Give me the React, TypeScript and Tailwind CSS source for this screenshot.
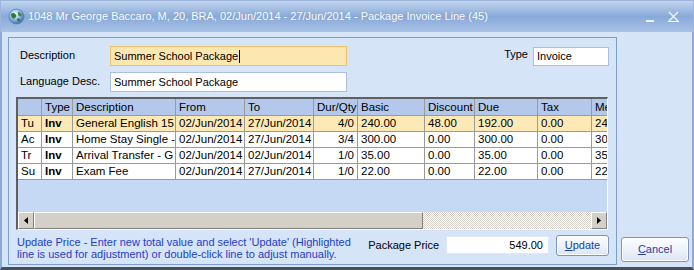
import React from "react";

const cols = [
  { w: 24, label: "", align: "left" },
  { w: 31, label: "Type", align: "left" },
  { w: 103, label: "Description", align: "left" },
  { w: 69, label: "From", align: "left" },
  { w: 69, label: "To", align: "left" },
  { w: 44, label: "Dur/Qty", align: "right" },
  { w: 67, label: "Basic", align: "left" },
  { w: 50, label: "Discount", align: "left" },
  { w: 63, label: "Due", align: "left" },
  { w: 54, label: "Tax", align: "left" },
  { w: 60, label: "Me", align: "left" },
];

const rows = [
  ["Tu", "Inv", "General English 15", "02/Jun/2014", "27/Jun/2014", "4/0", "240.00", "48.00", "192.00", "0.00", "240.00"],
  ["Ac", "Inv", "Home Stay Single -", "02/Jun/2014", "27/Jun/2014", "3/4", "300.00", "0.00", "300.00", "0.00", "300.00"],
  ["Tr", "Inv", "Arrival Transfer - G", "02/Jun/2014", "02/Jun/2014", "1/0", "35.00", "0.00", "35.00", "0.00", "35.00"],
  ["Su", "Inv", "Exam Fee", "02/Jun/2014", "27/Jun/2014", "1/0", "22.00", "0.00", "22.00", "0.00", "22.00"],
];

function Globe() {
  return (
    <svg width="17" height="17" viewBox="0 0 17 17">
      <defs>
        <radialGradient id="g1" cx="40%" cy="35%" r="70%">
          <stop offset="0%" stopColor="#ffffff" />
          <stop offset="45%" stopColor="#9cc4e8" />
          <stop offset="100%" stopColor="#2e5fa8" />
        </radialGradient>
      </defs>
      <circle cx="8.5" cy="8.5" r="7.5" fill="url(#g1)" stroke="#5a7fb8" strokeWidth="0.8" />
      <path d="M3 6 C5 4 7 5 8 7 C9 9 7 10 5 11 C4 10 3 8 3 6 Z" fill="#2f7a3a" />
      <path d="M10 4 C12 4 14 6 14 8 C13 9 11 8 10 7 Z" fill="#3d8a44" />
      <path d="M9 11 C11 10 13 11 12 13 C11 14 9 13 9 11 Z" fill="#2f7a3a" />
    </svg>
  );
}

function Btn({ children, w, h }: { children: React.ReactNode; w: string; h: string }) {
  return (
    <div
      className={`${w} ${h} flex items-center justify-center rounded-[3px] border border-[#7d95bd] bg-gradient-to-b from-[#fbfdff] via-[#eef3fb] to-[#dbe5f3] text-[#1d3f9e] shadow-[inset_0_0_0_1px_#ffffff]`}
    >
      {children}
    </div>
  );
}

export default function App() {
  return (
    <div
      className="w-[694px] h-[270px] flex flex-col overflow-hidden text-[11px] leading-[13px] text-black"
      style={{ fontFamily: '"Liberation Sans", Arial, sans-serif' }}
    >
      {/* Title bar */}
      <div className="h-[32px] flex items-center border-t border-l border-r border-[#9db4dc] bg-gradient-to-b from-[#c3d5ef] via-[#88a9d8] to-[#a9c2e6] pl-[7px] pr-[14px]">
        <Globe />
        <div className="ml-[3px] text-white text-[11px] [text-shadow:0_0_1px_#6f8fc0] whitespace-nowrap">
          1048 Mr George Baccaro, M, 20, BRA, 02/Jun/2014 - 27/Jun/2014 - Package Invoice Line (45)
        </div>
        <div className="flex-1" />
        <div className="flex items-center gap-[14px]">
          <div className="w-[8px] h-[2px] bg-[#eef3fa] mt-[8px]" />
          <svg width="11" height="11" viewBox="0 0 11 11" className="mb-[1px]">
            <path d="M1 1 L10 10 M10 1 L1 10" stroke="#e6edf7" strokeWidth="1.6" />
            <path d="M0 10.5 L11 10.5" stroke="#ffffff" strokeWidth="1" />
          </svg>
        </div>
      </div>

      {/* Body */}
      <div className="flex-1 flex bg-[#d6e4f8] border-l-[2px] border-l-[#8eaad6] border-r-[2px] border-r-[#8eaad6] border-b-[3px] border-b-[#4a4f58]">
        {/* Panel */}
        <div className="ml-[6px] mt-[5px] w-[609px] h-[228px] border border-[#7f9dca] flex flex-col">
          {/* Row 1 */}
          <div className="flex items-start pt-[8px] pl-[11px] pr-[7px]">
            <div className="w-[90px] pt-[3px]">Description</div>
            <div className="w-[237px] h-[20px] border border-[#f0c06a] bg-[#fde7b0] flex items-center pl-[3px]">
              Summer School Package
              <span className="inline-block w-[1px] h-[13px] bg-black ml-[1px]" />
            </div>
            <div className="flex-1" />
            <div className="pt-[2px] mr-[5px]">Type</div>
            <div className="w-[76px] h-[19px] mt-[1px] border border-[#a9bfdc] bg-white flex items-center pl-[3px]">
              Invoice
            </div>
          </div>
          {/* Row 2 */}
          <div className="flex items-start mt-[6px] pl-[11px]">
            <div className="w-[90px] pt-[3px]">Language Desc.</div>
            <div className="w-[237px] h-[20px] border border-[#a9bfdc] bg-white flex items-center pl-[3px]">
              Summer School Package
            </div>
          </div>

          {/* Grid */}
          <div className="ml-[7px] mt-[5px] w-[592px] h-[133px] border-t-[2px] border-l-[2px] border-t-[#5f5f5f] border-l-[#5f5f5f] border-r border-b border-r-white border-b-white flex flex-col bg-[#c5d9f5]">
            <div className="flex-1 overflow-hidden">
              {/* header */}
              <div className="flex h-[17px] bg-[#b3c8ea]">
                {cols.map((c, i) => (
                  <div
                    key={i}
                    style={{ width: c.w }}
                    className="shrink-0 h-full border-r border-b border-[#9a9a9a] pl-[3px] flex items-center text-[11.5px] whitespace-nowrap overflow-hidden"
                  >
                    {c.label}
                  </div>
                ))}
              </div>
              {rows.map((r, ri) => (
                <div key={ri} className={`flex h-[16px] ${ri === 0 ? "bg-[#fde9b5]" : "bg-white"}`}>
                  {r.map((v, ci) => (
                    <div
                      key={ci}
                      style={{ width: cols[ci].w }}
                      className={`shrink-0 h-full border-r border-b border-[#9a9a9a] flex items-center whitespace-nowrap overflow-hidden text-[11.5px] ${
                        cols[ci].align === "right" ? "justify-end pr-[3px]" : "pl-[3px]"
                      } ${ci === 1 ? "font-bold" : ""}`}
                    >
                      {v}
                    </div>
                  ))}
                </div>
              ))}
            </div>
            {/* Scrollbar */}
            <div className="h-[17px] flex bg-[#d4d0c8]">
              <div className="w-[16px] h-full border border-t-white border-l-white border-r-[#808080] border-b-[#808080] bg-[#d4d0c8] flex items-center justify-center">
                <svg width="4" height="7" viewBox="0 0 4 7">
                  <path d="M4 0 L0 3.5 L4 7 Z" fill="#000" />
                </svg>
              </div>
              <div className="w-[389px] h-full border border-t-white border-l-white border-r-[#808080] border-b-[#808080] bg-[#d4d0c8]" />
              <div className="flex-1 h-full bg-[repeating-conic-gradient(#d4d0c8_0_25%,#ffffff_0_50%)] bg-[length:2px_2px]" />
              <div className="w-[16px] h-full border border-t-white border-l-white border-r-[#808080] border-b-[#808080] bg-[#d4d0c8] flex items-center justify-center">
                <svg width="4" height="7" viewBox="0 0 4 7">
                  <path d="M0 0 L4 3.5 L0 7 Z" fill="#000" />
                </svg>
              </div>
            </div>
          </div>

          {/* Bottom */}
          <div className="flex items-start ml-[8px] mt-[5px] pr-[7px]">
            <div className="w-[345px] text-[#1f3fc4] text-[11px] leading-[12px] pt-[1px]">
              Update Price - Enter new total value and select 'Update' (Highlighted line is used for adjustment) or double-click line to adjust manually.
            </div>
            <div className="ml-[14px] mt-[4px] whitespace-nowrap w-[70px]">Package Price</div>
            <div className="ml-[8px] mt-[1px] w-[105px] h-[18px] bg-white border border-[#dfe8f5] flex items-center justify-end pr-[5px]">
              549.00
            </div>
            <div className="ml-[7px]">
              <Btn w="w-[53px]" h="h-[21px]">
                <span>
                  <span className="underline">U</span>pdate
                </span>
              </Btn>
            </div>
          </div>
        </div>

        {/* Right column */}
        <div className="flex-1 flex flex-col">
          <div className="mt-[205px] ml-[4px]">
            <Btn w="w-[68px]" h="h-[25px]">
              <span>
                <span className="underline">C</span>ancel
              </span>
            </Btn>
          </div>
        </div>
      </div>
    </div>
  );
}
